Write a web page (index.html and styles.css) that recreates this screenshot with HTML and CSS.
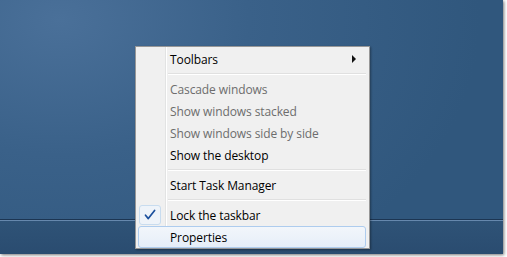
FILE: index.html
```html
<!DOCTYPE html>
<html>
<head>
<meta charset="utf-8">
<link rel="stylesheet" href="styles.css">
</head>
<body>
<div class="frame">
  <div class="desktop">
    <div class="workspace"></div>
    <div class="taskbar"></div>
    <div class="menu">
      <div class="item"><span class="icon"></span><span class="label">Toolbars</span><span class="arrow"></span></div>
      <div class="sep"></div>
      <div class="item disabled"><span class="icon"></span><span class="label">Cascade windows</span></div>
      <div class="item disabled"><span class="icon"></span><span class="label">Show windows stacked</span></div>
      <div class="item disabled"><span class="icon"></span><span class="label">Show windows side by side</span></div>
      <div class="item"><span class="icon"></span><span class="label">Show the desktop</span></div>
      <div class="sep"></div>
      <div class="item"><span class="icon"></span><span class="label">Start Task Manager</span></div>
      <div class="sep"></div>
      <div class="item"><span class="icon checked"><svg width="12" height="12" viewBox="0 0 12 12"><path d="M1.5 6.2 L4.3 9.6 L10.6 1.4" fill="none" stroke="#1b4f9c" stroke-width="1.7" stroke-linecap="round" stroke-linejoin="round"/></svg></span><span class="label">Lock the taskbar</span></div>
      <div class="item hover"><span class="icon"></span><span class="label">Properties</span></div>
    </div>
  </div>
</div>
</body>
</html>
```
FILE: styles.css
```css
html, body {
  margin: 0;
  padding: 0;
  background: #ffffff;
}
.frame {
  width: 507px;
  height: 257px;
  overflow: hidden;
  background: #ffffff;
}
.desktop {
  position: relative;
  width: 503px;
  height: 254px;
  display: flex;
  flex-direction: column;
  box-shadow: 1px 1px 3px rgba(0,0,0,0.55);
  background: radial-gradient(ellipse 420px 300px at 60px 20px, #4a7099 0%, #3a6189 45%, #30577d 100%);
}
.workspace {
  flex: 1;
}
.taskbar {
  height: 34px;
  border-top: 1px solid #1c3552;
  box-shadow: inset 0 1px 0 #6688ad;
  background: linear-gradient(to bottom, #2f5377 0%, #2a4c70 100%);
}
.menu {
  position: absolute;
  left: 135px;
  top: 46px;
  width: 228px;
  padding: 1px 3px 0 2px;
  background: #f0f0f0;
  border: 1px solid #979797;
  box-shadow: 1px 1px 2px rgba(0,0,0,0.35);
  font-family: "Open Sans", "Noto Sans", sans-serif;
  font-size: 12px;
  color: #000000;
  background-image: linear-gradient(to right, transparent 29px, #e2e3e3 29px, #e2e3e3 30px, #ffffff 30px, #ffffff 31px, transparent 31px);
}
.item {
  height: 22px;
  display: flex;
  align-items: center;
  position: relative;
  box-sizing: border-box;
  border: 1px solid transparent;
  border-radius: 3px;
}
.item.disabled {
  color: #6d6d6d;
}
.item.hover {
  border-color: #aeccee;
  background: linear-gradient(to bottom, #f2f6fb 0%, #e6eef8 100%);
}
.icon {
  width: 22px;
  height: 20px;
  margin-right: 9px;
  display: flex;
  align-items: center;
  justify-content: center;
  box-sizing: border-box;
}
.icon.checked {
  border: 1px solid #c8dcef;
  border-radius: 3px;
  background: #eef3f9;
}
.label {
  flex: 1;
  white-space: nowrap;
  letter-spacing: -0.1px;
}
.arrow {
  width: 0;
  height: 0;
  border-top: 4px solid transparent;
  border-bottom: 4px solid transparent;
  border-left: 4px solid #111;
  margin-right: 9px;
}
.sep {
  height: 8px;
  margin-left: 30px;
  background: linear-gradient(to bottom, transparent 3px, #e0e0e0 3px, #e0e0e0 4px, #ffffff 4px, #ffffff 5px, transparent 5px);
}
```
